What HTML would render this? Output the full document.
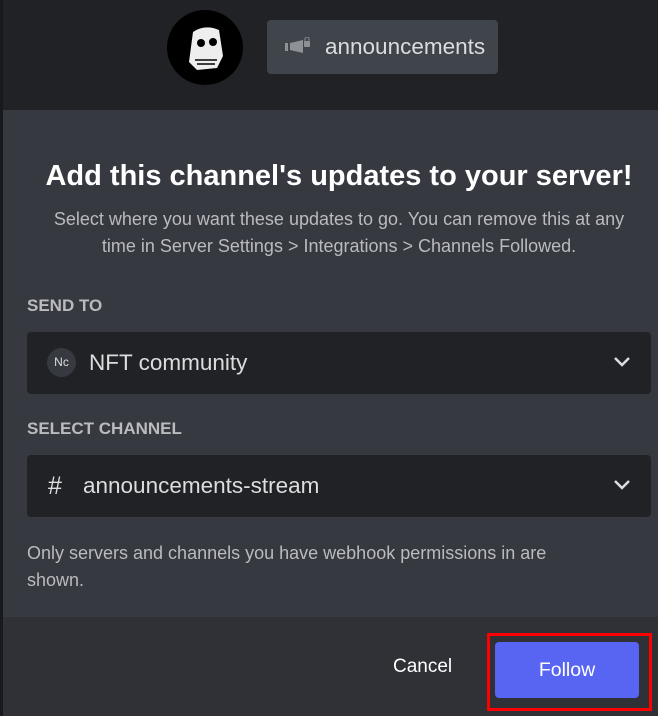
<!DOCTYPE html>
<html><head><style>
body{margin:0;width:658px;height:716px;overflow:hidden;background:#36393f;font-family:"Liberation Sans",sans-serif;position:relative}
.hdr{position:absolute;left:0;top:0;width:658px;height:110px;background:#202225}
.strip{position:absolute;left:0;top:0;width:3px;height:716px;background:#18191c}
.av{position:absolute;left:167px;top:10px;width:76px;height:75px;border-radius:50%;background:#000}
.chip{position:absolute;left:267px;top:20px;width:231px;height:54px;background:#40444b;border-radius:4px;color:#dcddde;font-size:22.5px;line-height:54px}
h1{position:absolute;top:160px;left:0;width:678px;text-align:center;margin:0;color:#fff;font-size:29px;font-weight:bold}
.sub{position:absolute;top:206px;left:20px;width:638px;text-align:center;color:#b9bbbe;font-size:18px;line-height:27px;white-space:nowrap}
.lbl{position:absolute;left:27px;color:#b9bbbe;font-size:17px;font-weight:bold}
.sel{position:absolute;left:27px;width:624px;height:62px;background:#202225;border-radius:4px;color:#dcddde;font-size:22.5px;line-height:62px}
.note{position:absolute;left:27px;top:540px;width:575px;color:#b9bbbe;font-size:18px;line-height:27px}
.foot{position:absolute;left:3px;top:617px;width:655px;height:99px;background:#2f3136}
.cancel{position:absolute;left:393px;top:656px;color:#fff;font-size:19px}
.box{position:absolute;left:487px;top:633px;width:159px;height:72px;border:3px solid #f00}
.btn{position:absolute;left:495px;top:642px;width:144px;height:56px;background:#5865f2;border-radius:4px;color:#fff;font-size:19.5px;line-height:56px;text-align:center}
</style></head><body>
<div class="hdr"></div>
<div class="strip"></div>
<div class="av"><svg width="76" height="75" viewBox="0 0 76 75"><path d="M26 22 Q38 14 52 20 L56 46 L50 58 L30 60 L22 52 Z" fill="#eee"/><circle cx="34" cy="33" r="4" fill="#000"/><circle cx="46" cy="32" r="4" fill="#000"/><path d="M28 50 H50 M30 54 H48" stroke="#000" stroke-width="1.5"/></svg></div>
<div class="chip"><svg style="position:absolute;left:18px;top:17px" width="26" height="20" viewBox="0 0 26 20"><rect x="0" y="6" width="3" height="8" fill="#8e9297"/><path d="M5 6 L18 3 V16 L5 13 Z" fill="#8e9297"/><rect x="19" y="4" width="6" height="6" rx="1" fill="#8e9297"/><path d="M20 4 V2 a2 2 0 0 1 4 0 V4" stroke="#8e9297" fill="none"/></svg><span style="position:absolute;left:58px">announcements</span></div>
<h1>Add this channel's updates to your server!</h1>
<div class="sub">Select where you want these updates to go. You can remove this at any<br>time in Server Settings &gt; Integrations &gt; Channels Followed.</div>
<div class="lbl" style="top:296px">SEND TO</div>
<div class="sel" style="top:332px"><div style="position:absolute;left:20px;top:16px;width:29px;height:29px;border-radius:50%;background:#36393f;color:#dcddde;font-size:12px;line-height:29px;text-align:center">Nc</div><span style="position:absolute;left:62px">NFT community</span><svg style="position:absolute;right:20px;top:24px" width="18" height="12" viewBox="0 0 18 12"><path d="M2 2 L9 9 L16 2" stroke="#dcddde" stroke-width="2.5" fill="none"/></svg></div>
<div class="lbl" style="top:419px">SELECT CHANNEL</div>
<div class="sel" style="top:455px"><span style="position:absolute;left:21px;font-size:25px">#</span><span style="position:absolute;left:56px">announcements-stream</span><svg style="position:absolute;right:20px;top:24px" width="18" height="12" viewBox="0 0 18 12"><path d="M2 2 L9 9 L16 2" stroke="#dcddde" stroke-width="2.5" fill="none"/></svg></div>
<div class="note">Only servers and channels you have webhook permissions in are shown.</div>
<div class="foot"></div>
<div class="cancel">Cancel</div>
<div class="box"></div>
<div class="btn">Follow</div>
</body></html>
